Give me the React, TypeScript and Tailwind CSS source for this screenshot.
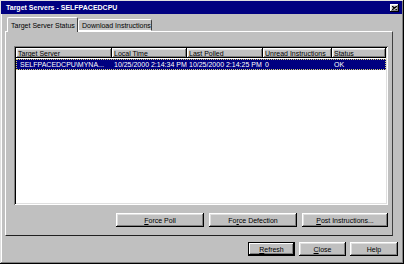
import React from "react";

const raised =
  "shadow-[inset_-1px_-1px_0_#000,inset_1px_1px_0_#fff,inset_-2px_-2px_0_#808080,inset_2px_2px_0_#dfdfdf]";

function Btn({ children, w, def }: { children: React.ReactNode; w: string; def?: boolean }) {
  return (
    <div
      className={`${w} h-[14px] flex items-center justify-center bg-[#c0c0c0] text-black ${
        def
          ? "shadow-[inset_0_0_0_1px_#000,inset_-2px_-2px_0_#000,inset_2px_2px_0_#fff,inset_-3px_-3px_0_#808080]"
          : raised
      }`}
    >
      <span className="leading-none">{children}</span>
    </div>
  );
}

const cols = [
  { label: "Target Server", w: "w-[96px]" },
  { label: "Local Time", w: "w-[75px]" },
  { label: "Last Polled", w: "w-[76px]" },
  { label: "Unread Instructions", w: "w-[69px]" },
  { label: "Status", w: "flex-1" },
];

export default function App() {
  return (
    <div
      className="w-[404px] h-[264px] bg-[#c0c0c0] flex flex-col text-[7px] text-black shadow-[inset_-1px_-1px_0_#000,inset_1px_1px_0_#dfdfdf,inset_-2px_-2px_0_#808080,inset_2px_2px_0_#fff]"
      style={{ fontFamily: '"Liberation Sans", Arial, sans-serif' }}
    >
      {/* title bar */}
      <div className="mx-[1px] mt-[1px] mr-[2px] h-[13px] bg-[#000080] flex items-center justify-between pl-[5px] pr-[3px]">
        <span className="text-white font-bold leading-none">Target Servers - SELFPACEDCPU</span>
        <div className={`w-[9px] h-[8px] bg-[#c0c0c0] flex items-center justify-center ${raised}`}>
          <svg width="5" height="4" viewBox="0 0 5 4">
            <path d="M0 0L5 4M5 0L0 4" stroke="#000" strokeWidth="1.2" />
          </svg>
        </div>
      </div>

      {/* tabs */}
      <div className="flex items-end pl-[7px] mt-[2px] h-[15px] relative z-10">
        <div className="w-[71px] h-[15px] bg-[#c0c0c0] border-t border-l border-white border-r border-r-[#404040] rounded-t-[2px] flex items-center pl-[3px] -mb-[1px]">
          <span className="leading-none">Target Server Status</span>
        </div>
        <div className="w-[74px] h-[12px] bg-[#c0c0c0] border-t border-l border-white border-r border-r-[#404040] rounded-t-[2px] flex items-center pl-[3px] border-b border-b-white">
          <span className="leading-none">Download Instructions</span>
        </div>
      </div>

      {/* panel */}
      <div className="mx-[5px] mr-[11px] h-[205px] border-t border-l border-white border-r border-r-[#404040] border-b border-b-[#202020] flex flex-col pl-[8px] pr-[4px] pt-[14px]">
        <div className="h-[159px] bg-white flex flex-col p-[2px] shadow-[inset_1px_1px_0_#808080,inset_-1px_-1px_0_#fff,inset_2px_2px_0_#000,inset_-2px_-2px_0_#dfdfdf]">
          <div className="flex h-[10px]">
            {cols.map((c) => (
              <div
                key={c.label}
                className={`${c.w} h-[10px] bg-[#c0c0c0] flex items-center pl-[2px] ${raised}`}
              >
                <span className="leading-none whitespace-nowrap">{c.label}</span>
              </div>
            ))}
          </div>
          <div className="flex h-[11px] bg-[#000080] text-white border border-dotted border-[#d8d070] mt-[1px]">
            <div className="w-[96px] flex items-center pl-[3px]"><span className="leading-none">SELFPACEDCPU\MYNA...</span></div>
            <div className="w-[75px] flex items-center pl-[1px]"><span className="leading-none">10/25/2000 2:14:34 PM</span></div>
            <div className="w-[76px] flex items-center pl-[1px]"><span className="leading-none">10/25/2000 2:14:25 PM</span></div>
            <div className="w-[69px] flex items-center pl-[1px]"><span className="leading-none">0</span></div>
            <div className="flex-1 flex items-center pl-[1px]"><span className="leading-none">OK</span></div>
          </div>
        </div>
        <div className="flex justify-end gap-[5px] mt-[8px]">
          <Btn w="w-[88px]"><span className="underline">F</span>orce Poll</Btn>
          <Btn w="w-[88px]">Fo<span className="underline">r</span>ce Defection</Btn>
          <Btn w="w-[86px]"><span className="underline">P</span>ost Instructions...</Btn>
        </div>
      </div>

      {/* bottom buttons */}
      <div className="flex justify-end gap-[4px] pr-[6px] mt-[6px]">
        <Btn w="w-[47px]" def><span className="underline">R</span>efresh</Btn>
        <Btn w="w-[47px]"><span className="underline">C</span>lose</Btn>
        <Btn w="w-[48px]">Help</Btn>
      </div>
    </div>
  );
}
